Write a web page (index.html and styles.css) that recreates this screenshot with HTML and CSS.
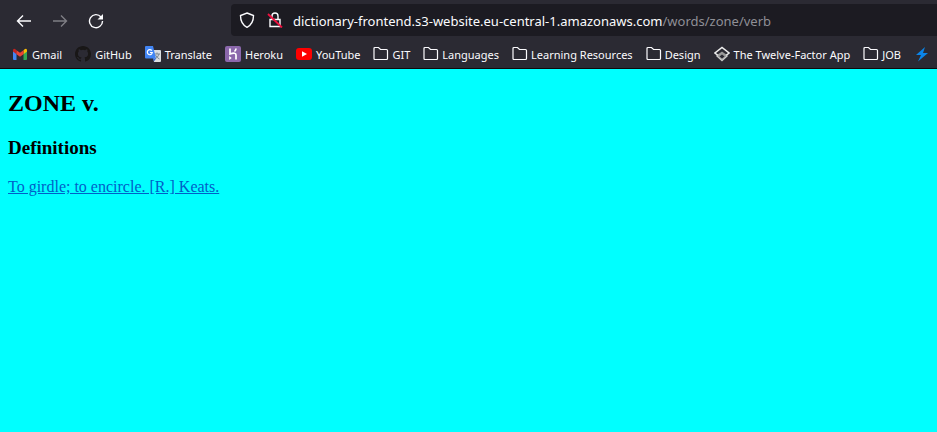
FILE: index.html
```html
<!DOCTYPE html>
<html lang="en">
<head>
<meta charset="utf-8">
<title>ZONE v.</title>
<link rel="stylesheet" href="styles.css">
</head>
<body>
<header class="chrome">
  <div class="toolbar">
    <nav class="nav-buttons" aria-label="History">
      <button class="nav-button" type="button" aria-label="Back"><svg viewBox="0 0 16 16"><path d="M15 8H1.500M7 2.500L1.500 8L7 13.500"/></svg></button>
      <button class="nav-button" type="button" aria-label="Forward" disabled><svg viewBox="0 0 16 16"><path d="M1 8H14.500M9 2.500L14.500 8L9 13.500"/></svg></button>
      <button class="nav-button" type="button" aria-label="Reload"><svg viewBox="0 0 16 16"><path d="M13 4A6.500 6.500 0 1 0 14.500 8"/><path class="solid" d="M15 1V6.500H9.500Z"/></svg></button>
    </nav>
    <div class="address">
      <div class="address-icons">
        <button class="address-button" type="button" aria-label="Tracking protection"><svg viewBox="0 0 16 16"><path d="M8 1L14.500 3.500C14.500 9 12.500 13 8 15.300C3.500 13 1.500 9 1.500 3.500Z"/></svg></button>
        <button class="address-button" type="button" aria-label="Connection not secure"><svg viewBox="0 0 16 16"><path d="M5 7V4A3 3 0 0 1 11 4V7M3 7.500H13V14.500H3Z"/><path class="slash" d="M1 2L15 15.500"/></svg></button>
      </div>
      <a class="url" href="#">dictionary-frontend.s3-website.eu-central-1.amazonaws.com<span class="path">/words/zone/verb</span></a>
    </div>
  </div>
  <nav class="bookmarks" aria-label="Bookmarks">
    <a class="bookmark" href="#"><svg viewBox="0 0 16 16"><path fill="#4285f4" d="M1 4L4.500 6.500V14H2Q1 14 1 13Z"/><path fill="#34a853" d="M15 4L11.500 6.500V14H14Q15 14 15 13Z"/><path fill="#fbbc04" d="M11.500 4.200L13 3Q15 2 15 4.500V5.500L11.500 8.200Z"/><path fill="#c5221f" d="M4.500 4.200L3 3Q1 2 1 4.500V5.500L4.500 8.200Z"/><path fill="#ea4335" d="M4.500 4.200L8 6.800L11.500 4.200V8.200L8 10.800L4.500 8.200Z"/></svg><span class="label">Gmail</span></a>
    <a class="bookmark" href="#"><svg viewBox="0 0 16 16"><path fill="#191717" d="M8 0C3.580 0 0 3.580 0 8c0 3.540 2.290 6.530 5.470 7.590.4.070.55-.17.55-.38 0-.19-.01-.82-.01-1.490-2.010.37-2.530-.49-2.690-.94-.09-.23-.48-.94-.82-1.130-.28-.15-.68-.52-.01-.53.63-.01 1.080.58 1.230.82.72 1.210 1.870.87 2.330.66.070-.52.28-.87.51-1.070-1.780-.2-3.640-.89-3.640-3.950 0-.87.31-1.590.82-2.150-.08-.2-.36-1.020.08-2.120 0 0 .67-.21 2.200.82a7.600 7.600 0 0 1 4 0c1.530-1.040 2.200-.82 2.200-.82.44 1.100.16 1.920.08 2.120.51.56.82 1.270.82 2.150 0 3.070-1.870 3.750-3.650 3.950.29.25.54.73.54 1.480 0 1.070-.01 1.930-.01 2.200 0 .21.15.46.55.38A8 8 0 0 0 16 8c0-4.420-3.580-8-8-8Z"/></svg><span class="label">GitHub</span></a>
    <a class="bookmark" href="#"><svg viewBox="0 0 16 16"><path fill="#dcdee1" d="M7 4H15Q16 4 16 5V15Q16 16 15 16H9Z"/><path fill="none" stroke="#7b8794" d="M9 8H15M12 6.500V8M14 8Q13 11.500 10 13M10.500 9Q12 12 14.500 13"/><path fill="#4285f4" d="M1 0H8L11 12.500H1Q0 12.500 0 11.500V1Q0 0 1 0Z"/><path fill="#3367d6" d="M8 12.500H11L9 15.500Z"/><path fill="none" stroke="#fff" stroke-width="1.200" d="M6.800 4.700A2.500 2.500 0 1 0 7.300 6.500H5"/></svg><span class="label">Translate</span></a>
    <a class="bookmark" href="#"><svg viewBox="0 0 16 16"><rect width="16" height="16" rx="2" fill="#8b68ac"/><path fill="none" stroke="#fff" stroke-width="1.700" d="M5 2.500V8Q11 6 11 9V13.500M11 2.500Q11 4 9.500 5.500"/><path fill="#fff" d="M4.200 10L6.700 12L4.200 14Z"/></svg><span class="label">Heroku</span></a>
    <a class="bookmark" href="#"><svg viewBox="0 0 16 16"><rect y="2" width="16" height="12" rx="3" fill="red"/><path fill="#fff" d="M6 5.200L11 8L6 10.800Z"/></svg><span class="label">YouTube</span></a>
    <a class="bookmark folder" href="#"><svg viewBox="0 0 16 16"><path d="M2 1.500H5.500L7.500 3.500H13.500Q14.500 3.500 14.500 4.500V12.500Q14.500 13.500 13.500 13.500H2Q1 13.500 1 12.500V2.500Q1 1.500 2 1.500Z"/></svg><span class="label">GIT</span></a>
    <a class="bookmark folder" href="#"><svg viewBox="0 0 16 16"><path d="M2 1.500H5.500L7.500 3.500H13.500Q14.500 3.500 14.500 4.500V12.500Q14.500 13.500 13.500 13.500H2Q1 13.500 1 12.500V2.500Q1 1.500 2 1.500Z"/></svg><span class="label">Languages</span></a>
    <a class="bookmark folder" href="#"><svg viewBox="0 0 16 16"><path d="M2 1.500H5.500L7.500 3.500H13.500Q14.500 3.500 14.500 4.500V12.500Q14.500 13.500 13.500 13.500H2Q1 13.500 1 12.500V2.500Q1 1.500 2 1.500Z"/></svg><span class="label">Learning Resources</span></a>
    <a class="bookmark folder" href="#"><svg viewBox="0 0 16 16"><path d="M2 1.500H5.500L7.500 3.500H13.500Q14.500 3.500 14.500 4.500V12.500Q14.500 13.500 13.500 13.500H2Q1 13.500 1 12.500V2.500Q1 1.500 2 1.500Z"/></svg><span class="label">Design</span></a>
    <a class="bookmark" href="#"><svg viewBox="0 0 16 16" fill="none" stroke-width="1.500"><path fill="#999" d="M3 9L8 5.500L13 9L8 14Z"/><path fill="#2b2a33" d="M5.500 10.500L8 8.500L10.500 10.500L8 12.500Z"/><path stroke="#eee" d="M4 9.500L1 7L8 1.500L15 7L12 9.500"/><path stroke="#ccc" d="M2.500 9.500L8 14.500L13.500 9.500"/></svg><span class="label">The Twelve-Factor App</span></a>
    <a class="bookmark folder" href="#"><svg viewBox="0 0 16 16"><path d="M2 1.500H5.500L7.500 3.500H13.500Q14.500 3.500 14.500 4.500V12.500Q14.500 13.500 13.500 13.500H2Q1 13.500 1 12.500V2.500Q1 1.500 2 1.500Z"/></svg><span class="label">JOB</span></a>
    <a class="bookmark" href="#" aria-label="Lightning"><svg viewBox="0 0 16 16"><path fill="#0b84e8" d="M11 1L2 9H7L4 15.500L14 7H9Z"/></svg></a>
  </nav>
</header>
<main class="page">
  <h2>ZONE v.</h2>
  <h3>Definitions</h3>
  <a class="definition" href="#">To girdle; to encircle. [R.] Keats.</a>
</main>
</body>
</html>
```
FILE: styles.css
```css
body {
  margin: 0;
  background: #00ffff;
  font-family: "Liberation Serif", serif;
}

.chrome {
  overflow: hidden;
  background: #2b2a33;
  border-bottom: 1px solid #0c0c0d;
  color: #fbfbfe;
  font-family: "Noto Sans", "Open Sans", sans-serif;
}

.toolbar {
  display: flex;
  height: 40px;
  align-items: center;
}

.nav-buttons {
  display: flex;
  gap: 20px;
  padding: 1px 16px 0;
  flex: none;
}

.nav-button,
.address-button {
  display: flex;
  padding: 0;
  border: 0;
  background: none;
  color: inherit;
}

.nav-button:disabled {
  opacity: 0.4;
}

.toolbar svg {
  width: 16px;
  height: 16px;
  fill: none;
  stroke: currentColor;
  stroke-width: 1.4;
}

.toolbar .solid {
  fill: currentColor;
  stroke: none;
}

.toolbar .slash {
  stroke: #f0103f;
  stroke-width: 1.8;
}

.address {
  display: flex;
  flex: 1;
  align-items: center;
  gap: 10px;
  height: 32px;
  margin-left: 111px;
  padding-left: 8px;
  background: #1c1b22;
  border-radius: 4px 0 0 4px;
}

.address-icons {
  display: flex;
  gap: 12px;
}

.url {
  padding-top: 2px;
  color: inherit;
  font-size: 13px;
  text-decoration: none;
  white-space: nowrap;
}

.path {
  color: #8f8f96;
}

.bookmarks {
  display: flex;
  height: 28px;
  padding-left: 12px;
  gap: 13px;
  align-items: center;
}

.bookmark {
  display: flex;
  flex: none;
  align-items: center;
  gap: 4px;
  color: inherit;
  font-size: 11px;
  line-height: 16px;
  text-decoration: none;
  white-space: nowrap;
}

.bookmark svg {
  width: 16px;
  height: 16px;
}

.label {
  padding-top: 2px;
}

.folder {
  gap: 3px;
}

.folder svg {
  fill: none;
  stroke: currentColor;
  stroke-width: 1.2;
}

.page {
  padding: 0 8px;
}

h2 {
  margin: 20px 0;
  font-size: 24px;
  line-height: 28px;
}

h3 {
  margin: 20px 0;
  font-size: 19px;
  line-height: 21px;
}

.definition {
  color: #0060c8;
  font-size: 16px;
}
```
